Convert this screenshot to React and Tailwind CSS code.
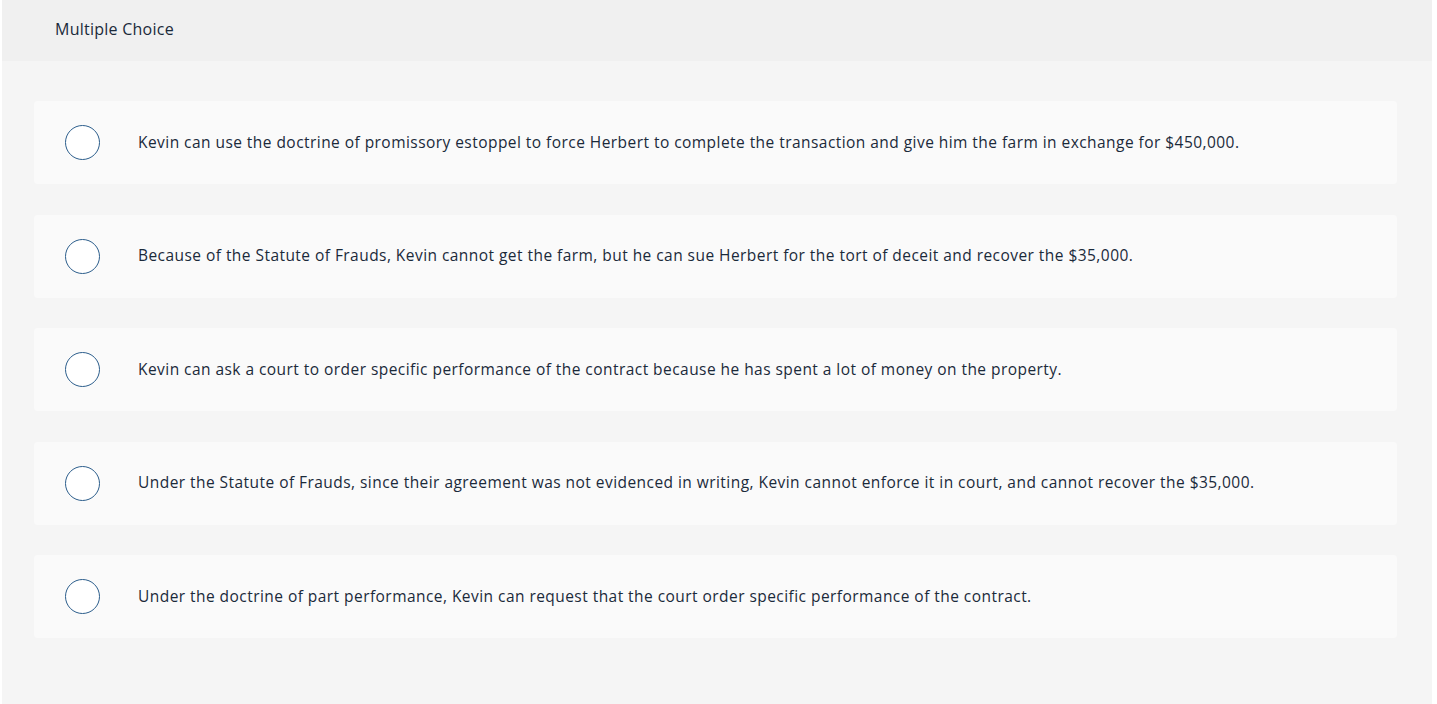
const options = [
  "Kevin can use the doctrine of promissory estoppel to force Herbert to complete the transaction and give him the farm in exchange for $450,000.",
  "Because of the Statute of Frauds, Kevin cannot get the farm, but he can sue Herbert for the tort of deceit and recover the $35,000.",
  "Kevin can ask a court to order specific performance of the contract because he has spent a lot of money on the property.",
  "Under the Statute of Frauds, since their agreement was not evidenced in writing, Kevin cannot enforce it in court, and cannot recover the $35,000.",
  "Under the doctrine of part performance, Kevin can request that the court order specific performance of the contract.",
];

export default function App() {
  return (
    <div className="h-[704px] w-[1437px] bg-white pl-[2px] pr-[5px] font-['Open_Sans',sans-serif] text-[#1b2a3a]">
      <div className="flex h-full flex-col bg-[#f5f5f5]">
        <div className="flex h-[61px] items-center bg-[#f0f0f0] pb-[3px] pl-[53px] text-[16px] tracking-[0.25px]">
          Multiple Choice
        </div>
        <div className="flex flex-col gap-[30.5px] pl-[32px] pr-[35px] pt-[40px]">
          {options.map((text, i) => (
            <div
              key={i}
              className="flex h-[83px] items-center rounded-[4px] bg-[#fafafa] pl-[31px]"
            >
              <div className="h-[35px] w-[35px] shrink-0 rounded-full border-[1.5px] border-[#2c5e8c] bg-white" />
              <div className="pl-[38px] text-[15.5px] tracking-[0.45px]">{text}</div>
            </div>
          ))}
        </div>
      </div>
    </div>
  );
}
